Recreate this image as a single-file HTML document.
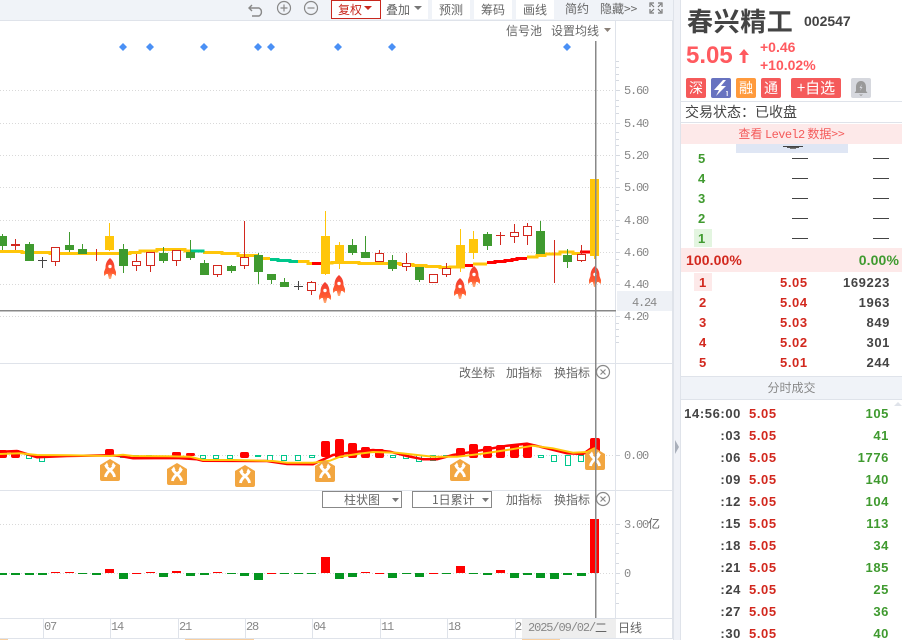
<!DOCTYPE html>
<html lang="zh"><head><meta charset="utf-8"><title>春兴精工</title>
<style>
html,body{margin:0;padding:0;background:#fff}
#p{position:relative;width:902px;height:640px;overflow:hidden;background:#fff;font:12px "WenQuanYi Zen Hei","Noto Sans CJK SC",sans-serif;color:#666}
#p div,#p span.a{position:absolute;white-space:nowrap}
.t{color:#666;font-size:12px;line-height:16px}
.n{color:#888;font:12px/14px "Liberation Mono",monospace;letter-spacing:-1.2px}
.b{font:bold 13px/16px "Liberation Sans",sans-serif;letter-spacing:.6px}
.r{color:#d2281e}.g{color:#3f9a2f}.k{color:#444}
.btn{background:#fff;top:0;height:19px;line-height:19px;text-align:center;color:#666;font-size:12px}
.sq{top:78px;width:20px;height:20px;border-radius:2px;color:#fff;text-align:center;line-height:20px;font-size:14px}
svg{position:absolute;left:0;top:0}
</style></head><body><div id="p">
<div style="left:0;top:0;width:673px;height:20px;background:#f0f3f8"></div>
<div style="left:0;top:20px;width:673px;height:1px;background:#dfe3ea"></div>
<div style="left:673px;top:0;width:8px;height:640px;background:#f0f2f7;border-left:1px solid #dfe3ea;border-right:1px solid #dfe3ea;box-sizing:border-box"></div>
<div class="btn" style="left:331px;width:50px;height:19px;box-sizing:border-box;border:1px solid #c8281e;color:#c8281e;line-height:17px;text-align:left;padding-left:6px">复权</div>
<div class="btn" style="left:381px;width:47px;text-align:left;padding-left:5px;box-sizing:border-box">叠加</div>
<div class="btn" style="left:432px;width:38px">预测</div>
<div class="btn" style="left:474px;width:38px">筹码</div>
<div class="btn" style="left:516px;width:38px">画线</div>
<div class="t" style="left:565px;top:1px">简约</div>
<div class="t" style="left:600px;top:1px">隐藏&gt;&gt;</div>
<div class="t" style="left:506px;top:23px">信号池</div>
<div class="t" style="left:551px;top:23px">设置均线</div>
<div class="t" style="left:459px;top:365px">改坐标</div>
<div class="t" style="left:506px;top:365px">加指标</div>
<div class="t" style="left:554px;top:365px">换指标</div>
<div style="left:322px;top:491px;width:80px;height:17px;border:1px solid #888;box-sizing:border-box;line-height:15px;font-size:12px;padding-left:21px">柱状图</div>
<div style="left:412px;top:491px;width:80px;height:17px;border:1px solid #888;box-sizing:border-box;line-height:15px;font-size:12px;padding-left:19px">1日累计</div>
<div class="t" style="left:506px;top:492px">加指标</div>
<div class="t" style="left:554px;top:492px">换指标</div>
<div style="left:617px;top:291px;width:55px;height:20px;background:#eef1f6"></div>
<div style="left:522px;top:619px;width:94px;height:19px;background:#eee"></div>
<svg width="902" height="640" viewBox="0 0 902 640" shape-rendering="crispEdges">
<defs>
<linearGradient id="rg" x1="0" y1="0" x2="0" y2="1"><stop offset="0" stop-color="#f23a30"/><stop offset=".7" stop-color="#ff5a30"/><stop offset="1" stop-color="#ffb27a"/></linearGradient>
<symbol id="rk" viewBox="0 0 12 21" width="12" height="21"><path shape-rendering="auto" fill="url(#rg)" d="M6 0C9.500 3 10.500 6 10.500 10L12 14V18L9.500 16H8.200L7 21H5L3.800 16H2.500L0 18V14L1.500 10C1.500 6 2.500 3 6 0Z"/><circle shape-rendering="auto" cx="6" cy="8.500" r="1.700" fill="#fff"/></symbol>
<symbol id="xb" viewBox="0 0 20 22" width="20" height="22"><path shape-rendering="auto" fill="#f2a640" d="M10 0L20 6V20Q20 22 18 22H2Q0 22 0 20V6Z"/><path shape-rendering="auto" fill="none" stroke="#fff" stroke-width="2.800" d="M6 6.500C6.500 10 14 12 14.500 18M14 6.500C13.500 10 6 12 5.500 18"/><path shape-rendering="auto" fill="#fff" d="M4 7L7 3.500 8.500 7ZM16 7L13 3.500 11.500 7Z"/></symbol>
</defs>
<g fill="none" stroke="#d9d9d9" stroke-dasharray="1 2">
<path d="M0 90.500H616M0 123.500H616M0 155.500H616M0 187.500H616M0 220.500H616M0 252.500H616M0 284.500H616M0 316.500H616M0 455.500H616M0 524.500H616M0 573.500H616"/>
</g>
<path fill="#dfe3ea" d="M0 363h673v1H0zM0 490h673v1H0zM0 618h673v1H0zM0 638h673v1H0zM615 21h1v597h-1zM672 21h1v617h-1zM43 619h1v19h-1zM110 619h1v19h-1zM178 619h1v19h-1zM245 619h1v19h-1zM312 619h1v19h-1zM380 619h1v19h-1zM447 619h1v19h-1zM515 619h1v19h-1z"/>
<path fill="#f8cfa0" d="M0 639h8v1H0zM185 639h69v1h-69zM522 639h38v1h-38z"/>
<path fill="none" stroke="#d5d9e0" d="M616 61.500h3M616 67.500h3M616 74.500h3M616 80.500h3M616 90.500h4M616 100.500h3M616 106.500h3M616 113.500h3M616 123.500h4M616 132.500h3M616 139.500h3M616 145.500h3M616 155.500h4M616 165.500h3M616 171.500h3M616 178.500h3M616 187.500h4M616 197.500h3M616 204.500h3M616 210.500h3M616 220.500h4M616 226.500h3M616 233.500h3M616 239.500h3M616 252.500h4M616 259.500h3M616 265.500h3M616 272.500h3M616 284.500h4M616 316.500h4M616 323.500h3M616 329.500h3M616 336.500h3M616 342.500h3M616 455.500h4M616 524.500h4M616 533.500h3M616 543.500h3M616 553.500h3M616 563.500h3M616 573.500h4M616 583.500h3M616 593.500h3M616 603.500h3"/>
<path fill="#888" d="M0 310h616v1.500H0z"/>
<!-- diamonds -->
<path shape-rendering="auto" fill="#4a90f5" d="M123 43l4 4-4 4-4-4zM150 43l4 4-4 4-4-4zM204 43l4 4-4 4-4-4zM258 43l4 4-4 4-4-4zM271 43l4 4-4 4-4-4zM338 43l4 4-4 4-4-4zM392 43l4 4-4 4-4-4zM567 43l4 4-4 4-4-4z"/>
<!-- ma -->
<g fill="none" stroke-width="3">
<path stroke="#ffc60a" d="M0 251.500H22V252.500H50V253.500H130V252.500H140V251H157V249.500H185V251H190M203 252.500H222V253.500H238V255.500H257V258.500H270M298 261.500H308V263.500H312M322 263H332V262.500H359V263.500H400V264.500H413V265.500H426V266.500H440V267.500H450V267H465M473 264H487M527 257H537V255.500H545V254H560V252H573V253.500H580"/>
<path stroke="#00c78c" d="M190 251H203V252.500M270 259.500H278V260.500H290V261.500H298"/>
<path stroke="#f00" d="M312 263.500H322M465 265.500H473M487 262.500H495V261.500H505V260.500H512V259.500H517V258.500H527M580 252H590"/>
</g>
<!-- green candles -->
<path fill="#3f9a2f" d="M0 236h7v10H0zM2 234h1v16H2zM25 244h9v17h-9zM29 242h1v2h-1zM65 245h9v5h-9zM69 232h1v20h-1zM78 249h9v5h-9zM82 244h1v5h-1zM119 249h9v17h-9zM123 244h1v29h-1zM159 253h9v8h-9zM163 247h1v16h-1zM186 252h9v6h-9zM190 240h1v20h-1zM200 263h9v12h-9zM204 260h1v3h-1zM227 266h9v5h-9zM231 265h1v8h-1zM254 255h9v17h-9zM258 253h1v31h-1zM267 274h9v6h-9zM271 280h1v4h-1zM280 282h9v5h-9zM284 278h1v4h-1zM348 245h9v8h-9zM352 239h1v16h-1zM361 252h9v6h-9zM365 236h1v16h-1zM388 260h9v9h-9zM392 255h1v16h-1zM415 267h9v13h-9zM419 280h1v2h-1zM483 234h9v12h-9zM487 232h1v18h-1zM536 231h9v23h-9zM540 221h1v10h-1zM563 255h9v7h-9zM567 249h1v19h-1z"/>
<!-- red candles -->
<path fill="#d2281e" d="M11 244h9v2h-9zM15 239h1v11h-1zM55 261h1v5h-1zM96 249h1v12h-1zM136 254h1v17h-1zM150 266h1v6h-1zM176 261h1v5h-1zM217 275h1v2h-1zM244 221h1v36h-1zM244 266h1v3h-1zM311 281h1v14h-1zM379 250h1v3h-1zM406 253h1v18h-1zM446 263h1v14h-1zM496 235h9v1h-9zM500 232h1v13h-1zM514 224h1v19h-1zM527 223h1v22h-1zM554 240h1v43h-1zM581 245h1v17h-1z"/>
<path fill="#fff" stroke="#d2281e" d="M51.500 247.500h8v14h-8zM132.500 261.500h8v4h-8zM146.500 252.500h8v13h-8zM172.500 250.500h8v10h-8zM213.500 265.500h8v9h-8zM240.500 257.500h8v8h-8zM307.500 282.500h8v8h-8zM375.500 253.500h8v8h-8zM402.500 263.500h8v3h-8zM429.500 274.500h8v8h-8zM442.500 268.500h8v6h-8zM510.500 232.500h8v4h-8zM523.500 226.500h8v9h-8zM577.500 254.500h8v6h-8z"/>
<path fill="#444" d="M38 260h9v1h-9zM42 257h1v11h-1zM294 286h9v1h-9zM298 281h1v9h-1z"/>
<path fill="#ffc60a" d="M105 236h9v14h-9zM109 223h1v28h-1zM321 236h9v38h-9zM325 211h1v64h-1zM335 245h9v19h-9zM339 242h1v27h-1zM456 245h9v23h-9zM460 229h1v43h-1zM469 239h9v14h-9zM473 231h1v28h-1zM590 179h9v77h-9zM594 256h1v3h-1z"/>
<!-- macd bars -->
<g fill="#f00" shape-rendering="auto">
<rect x="-2" y="450" width="9" height="8" rx="2"/><rect x="11" y="450" width="9" height="8" rx="2"/><rect x="105" y="449" width="9" height="7" rx="2"/><rect x="172" y="452" width="9" height="4" rx="1.500"/><rect x="186" y="453" width="9" height="3" rx="1.500"/><rect x="240" y="452" width="9" height="6" rx="2"/><rect x="321" y="441" width="9" height="16" rx="2"/><rect x="335" y="439" width="9" height="19" rx="2"/><rect x="348" y="443" width="9" height="15" rx="2"/><rect x="361" y="447" width="9" height="11" rx="2"/><rect x="375" y="449" width="9" height="9" rx="2"/><rect x="456" y="448" width="9" height="9" rx="2"/><rect x="469" y="444" width="9" height="14" rx="2"/><rect x="483" y="446" width="9" height="12" rx="2"/><rect x="496" y="445" width="9" height="13" rx="2"/><rect x="510" y="444" width="9" height="14" rx="2"/><rect x="523" y="444" width="9" height="14" rx="2"/><rect x="590" y="438" width="10" height="24" rx="2"/>
</g>
<path fill="none" stroke="#00c78c" d="M26.500 455.500h5v3h-5zM39.500 455.500h5v6h-5zM120.500 455.500h4v2h-4zM200.500 455.500h5v3h-5zM213.500 455.500h5v3h-5zM227.500 455.500h5v3h-5zM267.500 455.500h5v5h-5zM281.500 455.500h5v5h-5zM295.500 455.500h5v5h-5zM309.500 455.500h5v2h-5zM390.500 455.500h5v2h-5zM403.500 455.500h5v3h-5zM416.500 455.500h5v6h-5zM430.500 455.500h5v5h-5zM443.500 455.500h5v1h-5zM538.500 455.500h5v2h-5zM551.500 455.500h5v6h-5zM565.500 455.500h5v10h-5zM578.500 455.500h5v6h-5z"/>
<path fill="#00c78c" d="M255 455h6v2h-6zM133 455h6v1h-6zM146 455h6v1h-6z"/>
<g fill="none" shape-rendering="auto">
<path stroke="#f00" stroke-width="2.500" d="M0 451.700L17 451 30 455 37 457.300 67 456 110 455.300 120 456 133 458.300 177 458 197 459.300 203 460.700 267 461 287 464 313 464.300 333 455 357 451.700 373 450 390 451.700 407 456 423 459.300 437 459.300 453 455 473 451.700 507 445.700 527 443.700 540 446.700 567 453.300 583 454 593 447"/>
<path stroke="#ffc60a" stroke-width="2" d="M0 454L20 453.300 37 455 70 455.300 110 456 123 454.700 133 456 167 456.300 190 456.700 203 460 233 460 273 461 287 462.700 313 462.700 330 460.700 340 456.700 357 454 373 452 397 452.700 417 455 433 456.700 457 456.700 480 454 507 450 533 445.700 553 448.300 573 452.700 587 452 595 448"/>
</g>
<!-- volume -->
<path fill="#f00" d="M51 572h9v1h-9zM65 572h9v1h-9zM105 569h9v4h-9zM132 573h9v1h-9zM146 572h9v1h-9zM172 571h9v2h-9zM213 572h9v1h-9zM267 573h9v1h-9zM321 557h9v16h-9zM361 572h9v1h-9zM375 573h9v1h-9zM429 573h9v1h-9zM456 566h9v7h-9zM496 570h9v3h-9zM590 519h9v54h-9z"/>
<path fill="#059520" d="M0 573h7v2H0zM11 573h9v2h-9zM25 573h9v2h-9zM38 573h9v2h-9zM78 573h9v1h-9zM92 573h9v2h-9zM119 573h9v6h-9zM159 573h9v4h-9zM186 573h9v3h-9zM200 573h9v2h-9zM227 573h9v1h-9zM240 573h9v3h-9zM254 573h9v7h-9zM280 573h9v1h-9zM294 573h9v1h-9zM307 573h9v1h-9zM335 573h9v6h-9zM348 573h9v4h-9zM388 573h9v5h-9zM402 573h9v1h-9zM415 573h9v4h-9zM442 573h9v1h-9zM469 573h9v1h-9zM483 573h9v2h-9zM510 573h9v5h-9zM523 573h9v2h-9zM536 573h9v5h-9zM550 573h9v6h-9zM563 573h9v2h-9zM577 573h9v3h-9z"/>
<!-- badges -->
<g shape-rendering="auto">
<use href="#rk" x="104" y="258"/><use href="#rk" x="319" y="282"/><use href="#rk" x="333" y="275"/><use href="#rk" x="454" y="278"/><use href="#rk" x="468" y="266"/><use href="#rk" x="589" y="266"/>
<use href="#xb" x="100" y="459"/><use href="#xb" x="167" y="463"/><use href="#xb" x="235" y="465"/><use href="#xb" x="315" y="460"/><use href="#xb" x="450" y="459"/><use href="#xb" x="585" y="448"/>
</g>
<path fill="#888" d="M595 41h1.500v577H595z"/>
<g shape-rendering="auto" fill="none" stroke="#888" stroke-width="1.200">
<path d="M252 5L249 8 252 11M249.500 8H259A4.500 4.500 0 0 1 259 16H252" stroke-width="1.400"/>
<circle cx="284" cy="8" r="6.500"/><path d="M280.500 8h7M284 4.500v7"/>
<circle cx="311" cy="8" r="6.500"/><path d="M307.500 8h7"/>
<path d="M650 7V3h4M658 3h4v4M662 9v4h-4M654 13h-4V9M651 4l3 3M661 4l-3 3M661 12l-3-3M651 12l3-3" stroke="#777"/>
<circle cx="603" cy="372" r="6.500"/><path d="M600.500 369.500l5 5M605.500 369.500l-5 5"/>
<circle cx="603" cy="499" r="6.500"/><path d="M600.500 496.500l5 5M605.500 496.500l-5 5"/>
</g>
<path shape-rendering="auto" fill="#c8281e" d="M364 6h8l-4 4z"/>
<path shape-rendering="auto" fill="#777" d="M414 6h8l-4 4z"/>
<path shape-rendering="auto" fill="#8a8078" d="M604 28h7l-3.500 4z"/>
<path shape-rendering="auto" fill="#777" d="M392 498h7l-3.500 4zM482 498h7l-3.500 4z"/>
<path shape-rendering="auto" fill="#a9afba" d="M675 440l4 7-4 7z"/>
<path shape-rendering="auto" fill="#dfe3ea" d="M898 402l4 4h-8z"/>
</svg>
<div class="n" style="left:624px;top:84px">5.60</div>
<div class="n" style="left:624px;top:117px">5.40</div>
<div class="n" style="left:624px;top:149px">5.20</div>
<div class="n" style="left:624px;top:181px">5.00</div>
<div class="n" style="left:624px;top:214px">4.80</div>
<div class="n" style="left:624px;top:246px">4.60</div>
<div class="n" style="left:624px;top:278px">4.40</div>
<div class="n" style="left:632px;top:296px">4.24</div>
<div class="n" style="left:624px;top:310px">4.20</div>
<div class="n" style="left:624px;top:449px">0.00</div>
<div class="n" style="left:624px;top:518px">3.00</div>
<div class="t" style="left:648px;top:516px">亿</div>
<div class="n" style="left:624px;top:567px">0</div>
<div class="n" style="left:44px;top:620px">07</div>
<div class="n" style="left:111px;top:620px">14</div>
<div class="n" style="left:179px;top:620px">21</div>
<div class="n" style="left:246px;top:620px">28</div>
<div class="n" style="left:313px;top:620px">04</div>
<div class="n" style="left:381px;top:620px">11</div>
<div class="n" style="left:448px;top:620px">18</div>
<div class="n" style="left:515px;top:620px">2</div>
<div class="n" style="left:528px;top:621px;letter-spacing:-1.1px">2025/09/02/</div>
<div class="t" style="left:595px;top:620px">二</div>
<div class="t" style="left:618px;top:620px">日线</div>

<!-- sidebar -->
<div style="left:687px;top:5px;font-size:26px;line-height:32px;font-weight:bold;color:#444;letter-spacing:.6px">春兴精工</div>
<div style="left:804px;top:12px;font:bold 14px/18px 'Liberation Sans',sans-serif;color:#444">002547</div>
<div style="left:686px;top:42px;font:bold 24px/28px 'Liberation Sans',sans-serif;color:#ff5a5f">5.05</div>
<svg width="902" height="640" viewBox="0 0 902 640"><path fill="#ff5a5f" d="M744 49l5 6h-3.500v8h-3v-8H739z"/></svg>
<div style="left:760px;top:39px;font:bold 14px/16px 'Liberation Sans',sans-serif;color:#ff5a5f">+0.46</div>
<div style="left:760px;top:57px;font:bold 14px/16px 'Liberation Sans',sans-serif;color:#ff5a5f">+10.02%</div>
<div class="sq" style="left:686px;background:#f55a5a">深</div>
<div class="sq" style="left:711px;background:#6873c0"></div>
<div class="sq" style="left:736px;background:#ff9a3c">融</div>
<div class="sq" style="left:761px;background:#f55a5a">通</div>
<div class="sq" style="left:791px;width:50px;background:#f55a5a;font-size:15px">+自选</div>
<div class="sq" style="left:851px;background:#d6d8de"></div>
<svg width="902" height="640" viewBox="0 0 902 640">
<path fill="#fff" d="M723 80L714 90H719L716 96 726 86H721L726 80Z"/>
<path fill="#fff" d="M726.500 91h1.200v5h-1v-4h-.7z"/>
<path fill="#999" d="M861 81C857.500 81 856 84 856 87V91L854.500 93H867.500L866 91V87C866 84 864.500 81 861 81ZM859 94.500H863L861 96Z"/>
<path fill="#d6d8de" d="M862 84L859.500 88H861L860 91 862.500 87H861Z"/>
</svg>
<div style="left:681px;top:101px;width:221px;height:1px;background:#dfe3ea"></div>
<div style="left:685px;top:104px;font-size:14px;line-height:17px;color:#444">交易状态：已收盘</div>
<div style="left:681px;top:122px;width:221px;height:1px;background:#dfe3ea"></div>
<div style="left:681px;top:124px;width:221px;height:20px;background:#fde9e9;text-align:center;color:#f45a5a;font-size:12px;line-height:20px">查看 <span style="font:12px 'Liberation Mono',monospace;letter-spacing:-.6px">Level2</span> 数据&gt;&gt;</div>
<div style="left:736px;top:144px;width:112px;height:9px;background:#dfe6f4"></div>
<div style="left:783px;top:146px;width:20px;height:1px;background:#444"></div>
<div style="left:787px;top:147px;width:12px;height:1px;background:#555"></div>
<div style="left:790px;top:148px;width:6px;height:1px;background:#777"></div>
<div style="left:694px;top:229px;width:18px;height:18px;background:#e3f5e0"></div>
<div class="b g" style="left:698px;top:151px">5</div><div class="b g" style="left:698px;top:171px">4</div><div class="b g" style="left:698px;top:191px">3</div><div class="b g" style="left:698px;top:211px">2</div><div class="b g" style="left:698px;top:231px">1</div>
<svg width="902" height="640" viewBox="0 0 902 640" shape-rendering="crispEdges"><path fill="#444" d="M792 158h16v1h-16zM873 158h16v1h-16zM792 178h16v1h-16zM873 178h16v1h-16zM792 198h16v1h-16zM873 198h16v1h-16zM792 218h16v1h-16zM873 218h16v1h-16zM792 238h16v1h-16zM873 238h16v1h-16z"/></svg>
<div style="left:681px;top:248px;width:221px;height:24px;background:#fde9e9"></div>
<div style="left:686px;top:252px;font:bold 14px/16px 'Liberation Sans',sans-serif;color:#d2281e;letter-spacing:.1px">100.00%</div>
<div style="right:3px;top:252px;font:bold 14px/16px 'Liberation Sans',sans-serif;color:#3f9a2f;letter-spacing:.1px">0.00%</div>
<div style="left:694px;top:273px;width:18px;height:18px;background:#fde9e9"></div>
<div class="b r" style="left:699px;top:275px">1</div><div class="b r" style="left:780px;top:275px">5.05</div><div class="b k" style="right:12px;top:275px">169223</div>
<div class="b r" style="left:699px;top:295px">2</div><div class="b r" style="left:780px;top:295px">5.04</div><div class="b k" style="right:12px;top:295px">1963</div>
<div class="b r" style="left:699px;top:315px">3</div><div class="b r" style="left:780px;top:315px">5.03</div><div class="b k" style="right:12px;top:315px">849</div>
<div class="b r" style="left:699px;top:335px">4</div><div class="b r" style="left:780px;top:335px">5.02</div><div class="b k" style="right:12px;top:335px">301</div>
<div class="b r" style="left:699px;top:355px">5</div><div class="b r" style="left:780px;top:355px">5.01</div><div class="b k" style="right:12px;top:355px">244</div>
<div style="left:681px;top:376px;width:221px;height:24px;background:#f0f3f8;border-top:1px solid #dfe3ea;border-bottom:1px solid #dfe3ea;box-sizing:border-box;text-align:center;color:#888;line-height:22px;font-size:12px">分时成交</div>
<div class="b k" style="right:161px;top:406px">14:56:00</div><div class="b r" style="left:749px;top:406px">5.05</div><div class="b g" style="right:13px;top:406px">105</div>
<div class="b k" style="right:161px;top:428px">:03</div><div class="b r" style="left:749px;top:428px">5.05</div><div class="b g" style="right:13px;top:428px">41</div>
<div class="b k" style="right:161px;top:450px">:06</div><div class="b r" style="left:749px;top:450px">5.05</div><div class="b g" style="right:13px;top:450px">1776</div>
<div class="b k" style="right:161px;top:472px">:09</div><div class="b r" style="left:749px;top:472px">5.05</div><div class="b g" style="right:13px;top:472px">140</div>
<div class="b k" style="right:161px;top:494px">:12</div><div class="b r" style="left:749px;top:494px">5.05</div><div class="b g" style="right:13px;top:494px">104</div>
<div class="b k" style="right:161px;top:516px">:15</div><div class="b r" style="left:749px;top:516px">5.05</div><div class="b g" style="right:13px;top:516px">113</div>
<div class="b k" style="right:161px;top:538px">:18</div><div class="b r" style="left:749px;top:538px">5.05</div><div class="b g" style="right:13px;top:538px">34</div>
<div class="b k" style="right:161px;top:560px">:21</div><div class="b r" style="left:749px;top:560px">5.05</div><div class="b g" style="right:13px;top:560px">185</div>
<div class="b k" style="right:161px;top:582px">:24</div><div class="b r" style="left:749px;top:582px">5.05</div><div class="b g" style="right:13px;top:582px">25</div>
<div class="b k" style="right:161px;top:604px">:27</div><div class="b r" style="left:749px;top:604px">5.05</div><div class="b g" style="right:13px;top:604px">36</div>
<div class="b k" style="right:161px;top:626px">:30</div><div class="b r" style="left:749px;top:626px">5.05</div><div class="b g" style="right:13px;top:626px">40</div>
</div></body></html>
